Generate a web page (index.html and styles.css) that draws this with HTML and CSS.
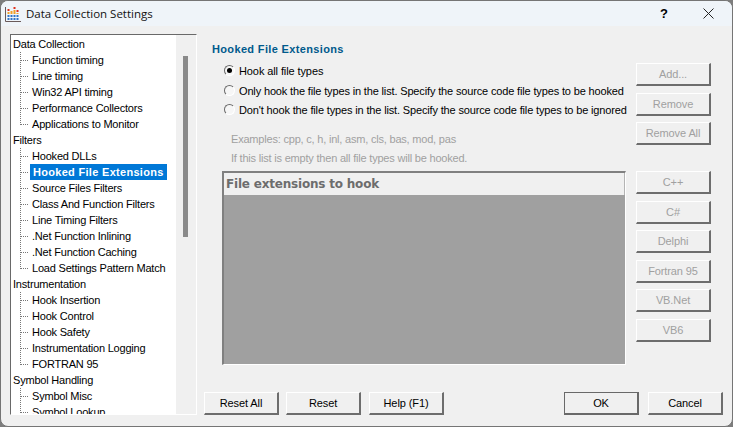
FILE: index.html
```html
<!DOCTYPE html>
<html lang="en">
<head>
    <meta charset="UTF-8">
    <title>Data Collection Settings</title>
    <link rel="stylesheet" href="styles.css">
</head>
<body>
    <div class="window">
        <div class="titlebar">
            <svg class="app-icon" width="16" height="16" viewBox="0 0 16 16">
                <path d="M.5 1v14.5H16" fill="none" stroke="#6a5a5a"/>
                <path d="M3.5 3v2M9.5 1v2M12.5 4v2" stroke="#e0301c" stroke-width="2"/>
                <path d="M3.5 6v2M6.5 5v3M9.5 4v4M12.5 7v1" stroke="#f0a028" stroke-width="2"/>
                <path d="M3.5 9v5M6.5 9v5M9.5 9v5M12.5 9v5" stroke="#2f74c8" stroke-width="2" stroke-dasharray="2 1"/>
            </svg>
            <div class="title">Data Collection Settings</div>
            <div class="help-btn">?</div>
            <svg class="close-btn" width="11" height="11" viewBox="0 0 11 11">
                <path d="M.5.5l10 10M10.5.5l-10 10" stroke="#222" fill="none"/>
            </svg>
        </div>
        <div class="content">
            <div class="left-col">
                <div class="tree">
                    <div class="tree-scroll">
                        <div class="group">Data Collection</div>
                        <div class="branch">
                            <div class="leaf"><span>Function timing</span></div>
                            <div class="leaf"><span>Line timing</span></div>
                            <div class="leaf"><span>Win32 API timing</span></div>
                            <div class="leaf"><span>Performance Collectors</span></div>
                            <div class="leaf"><span>Applications to Monitor</span></div>
                        </div>
                        <div class="group">Filters</div>
                        <div class="branch">
                            <div class="leaf"><span>Hooked DLLs</span></div>
                            <div class="leaf"><span class="selected">Hooked File Extensions</span></div>
                            <div class="leaf"><span>Source Files Filters</span></div>
                            <div class="leaf"><span>Class And Function Filters</span></div>
                            <div class="leaf"><span>Line Timing Filters</span></div>
                            <div class="leaf"><span>.Net Function Inlining</span></div>
                            <div class="leaf"><span>.Net Function Caching</span></div>
                            <div class="leaf"><span>Load Settings Pattern Match</span></div>
                        </div>
                        <div class="group">Instrumentation</div>
                        <div class="branch">
                            <div class="leaf"><span>Hook Insertion</span></div>
                            <div class="leaf"><span>Hook Control</span></div>
                            <div class="leaf"><span>Hook Safety</span></div>
                            <div class="leaf"><span>Instrumentation Logging</span></div>
                            <div class="leaf"><span>FORTRAN 95</span></div>
                        </div>
                        <div class="group">Symbol Handling</div>
                        <div class="branch">
                            <div class="leaf"><span>Symbol Misc</span></div>
                            <div class="leaf"><span>Symbol Lookup</span></div>
                        </div>
                    </div>
                    <div class="scrollbar"><div class="thumb"></div></div>
                </div>
            </div>
            <div class="right-col">
                <div class="pane">
                    <div class="pane-main">
                        <div class="heading">Hooked File Extensions</div>
                        <div class="options">
                            <div class="radio-row"><span class="radio checked"></span>Hook all file types</div>
                            <div class="radio-row"><span class="radio"></span>Only hook the file types in the list. Specify the source code file types to be hooked</div>
                            <div class="radio-row"><span class="radio"></span>Don't hook the file types in the list. Specify the source code file types to be ignored</div>
                        </div>
                        <div class="hints">
                            <div class="hint">Examples: cpp, c, h, inl, asm, cls, bas, mod, pas</div>
                            <div class="hint">If this list is empty then all file types will be hooked.</div>
                        </div>
                        <div class="list">
                            <div class="list-head">File extensions to hook</div>
                        </div>
                    </div>
                    <div class="pane-side">
                        <div class="btn-stack edit-stack">
                            <div class="btn disabled">Add...</div>
                            <div class="btn disabled">Remove</div>
                            <div class="btn disabled">Remove All</div>
                        </div>
                        <div class="btn-stack lang-stack">
                            <div class="btn disabled">C++</div>
                            <div class="btn disabled">C#</div>
                            <div class="btn disabled">Delphi</div>
                            <div class="btn disabled">Fortran 95</div>
                            <div class="btn disabled">VB.Net</div>
                            <div class="btn disabled">VB6</div>
                        </div>
                    </div>
                </div>
                <div class="footer">
                    <div class="btn">Reset All</div>
                    <div class="btn">Reset</div>
                    <div class="btn help">Help (F1)</div>
                    <div class="spacer"></div>
                    <div class="btn default">OK</div>
                    <div class="btn">Cancel</div>
                </div>
            </div>
        </div>
    </div>
</body>
</html>
```

FILE: styles.css
```css
html, body {
    margin: 0;
    height: 100%;
    background: #7d7d7d;
}

body {
    font-family: "Liberation Sans", Arial, sans-serif;
    font-size: 11px;
    color: #000;
    overflow: hidden;
}

.window {
    width: 733px;
    height: 427px;
    box-sizing: border-box;
    display: flex;
    flex-direction: column;
    background: #f0f0f0;
    border: 1px solid #757575;
    border-radius: 8px;
    overflow: hidden;
}

.titlebar {
    height: 25px;
    display: flex;
    align-items: center;
    padding-left: 4px;
    background: #eff4f9;
    flex: none;
}

.app-icon {
    margin-right: 5px;
}

.title {
    flex: 1;
    font-family: "Open Sans", "Liberation Sans", sans-serif;
    font-size: 11.5px;
    color: #111;
}

.help-btn {
    font-weight: bold;
    font-size: 13px;
    margin-right: 35px;
}

.close-btn {
    margin-right: 18px;
}

.content {
    flex: 1;
    display: flex;
    min-height: 0;
}

.left-col {
    width: 199px;
    flex: none;
    padding: 8px 0 11px 9px;
    box-sizing: border-box;
}

.tree {
    width: 187px;
    height: 100%;
    display: flex;
    box-sizing: border-box;
    background: #fff;
    border-style: solid;
    border-width: 1px;
    border-color: #696969 #fff #fff #696969;
    overflow: hidden;
}

.tree-scroll {
    flex: 1;
    padding-top: 1px;
    overflow: hidden;
    letter-spacing: -0.2px;
}

.group {
    height: 16px;
    line-height: 16px;
    padding-left: 2px;
    white-space: nowrap;
}

.branch {
    margin-left: 9px;
}

.leaf {
    height: 16px;
    line-height: 16px;
    padding-left: 10px;
    white-space: nowrap;
    background:
        repeating-linear-gradient(to right, #777 0 1px, transparent 1px 2px) 1px 8px / 8px 1px no-repeat,
        repeating-linear-gradient(to bottom, #777 0 1px, transparent 1px 2px) 0 0 / 1px 100% no-repeat;
}

.leaf:last-child {
    background-size: 8px 1px, 1px 9px;
}

.leaf span {
    display: inline-block;
    padding: 0 2px;
}

.leaf .selected {
    padding: 0 3px;
    background: #0078d7;
    color: #fff;
    font-weight: bold;
    letter-spacing: 0.3px;
}

.scrollbar {
    width: 20px;
    flex: none;
    background: #f0f0f0;
    padding-top: 21px;
    box-sizing: border-box;
}

.thumb {
    width: 5px;
    height: 181px;
    margin-left: 7px;
    background: #8a8a8a;
}

.right-col {
    flex: 1;
    min-width: 0;
    display: flex;
    flex-direction: column;
    padding-left: 4px;
}

.pane {
    display: flex;
    padding-left: 8px;
}

.pane-main {
    width: 424px;
    flex: none;
    padding-top: 15px;
    box-sizing: border-box;
}

.heading {
    height: 16px;
    line-height: 16px;
    font-weight: bold;
    color: #005a8c;
    letter-spacing: 0.35px;
}

.options {
    padding: 4px 0 0 12px;
}

.radio-row {
    display: flex;
    align-items: center;
    height: 19px;
    white-space: nowrap;
    letter-spacing: -0.15px;
}

.radio-row:first-child {
    margin-bottom: 1px;
    letter-spacing: -0.1px;
}

.radio {
    width: 9px;
    height: 9px;
    border: 1px solid;
    border-color: #696969 #fff #fff #696969;
    border-radius: 50%;
    margin-right: 4px;
    background: #f6f6f6;
    display: flex;
    align-items: center;
    justify-content: center;
    flex: none;
}

.radio.checked::after {
    content: "";
    width: 5px;
    height: 5px;
    background: #000;
    border-radius: 50%;
}

.hints {
    margin: 11px 0 3px;
    padding-left: 19px;
}

.hint {
    height: 19px;
    line-height: 19px;
    color: #a0a0a0;
    letter-spacing: -0.2px;
    white-space: nowrap;
}

.list {
    width: 404px;
    height: 194px;
    margin-left: 10px;
    box-sizing: border-box;
    background: #a0a0a0;
    border-style: solid;
    border-width: 2px 1px 1px 2px;
    border-color: #808080 #fff #fff #808080;
}

.list-head {
    height: 22px;
    line-height: 23px;
    padding-left: 2px;
    background: #f0f0f0;
    color: #6d6d6d;
    font-family: "DejaVu Sans", sans-serif;
    font-size: 12px;
    font-weight: bold;
    letter-spacing: -0.2px;
    border-right: 1px solid #b4b4b4;
}

.pane-side {
    padding-top: 37px;
}

.btn-stack {
    display: flex;
    flex-direction: column;
}

.edit-stack {
    gap: 6.5px;
}

.lang-stack {
    margin-top: 26px;
    gap: 6.6px;
}

.btn {
    width: 75px;
    height: 23px;
    line-height: 21px;
    box-sizing: border-box;
    flex: none;
    text-align: center;
    background: #f0f0f0;
    border-style: solid;
    border-width: 1px 2px 2px 1px;
    border-color: #fff #6d6d6d #6d6d6d #fff;
    white-space: nowrap;
    letter-spacing: -0.1px;
}

.btn.disabled {
    color: #a0a0a0;
}

.footer {
    display: flex;
    gap: 7px;
    margin-top: auto;
    padding: 0 9px 11px 0;
}

.help {
    margin-left: 1px;
}

.spacer {
    flex: 1;
}

.default {
    margin-right: 2px;
    border-color: #696969;
    border-width: 1px 2px 2px 1px;
}
```
